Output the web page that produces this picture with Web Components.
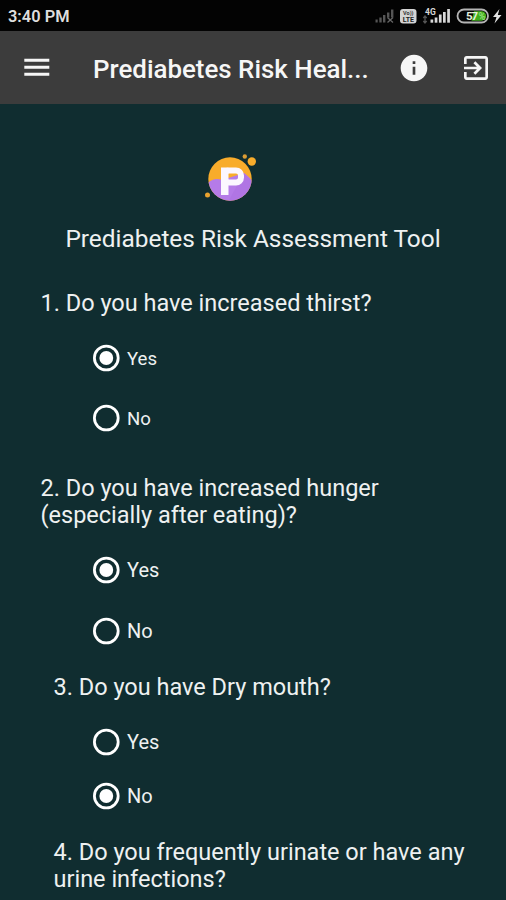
<!DOCTYPE html>
<html lang="en">
<head>
<meta charset="utf-8">
<meta name="viewport" content="width=device-width, initial-scale=1">
<title>Prediabetes Risk Assessment Tool</title>
<style>
  html, body {
    margin: 0;
    height: 100%;
    overflow: hidden;
    background: #102d30;
    color: #eef1f1;
    font-family: Roboto, sans-serif;
  }
</style>
</head>
<body>
<health-app>
  <status-bar slot="status">3:40 PM</status-bar>
  <app-toolbar slot="toolbar">Prediabetes Risk Heal...</app-toolbar>
  <app-logo></app-logo>
  <page-heading>Prediabetes Risk Assessment Tool</page-heading>

  <quiz-question style="--top: 38px; --left: 40.5px; --lead: 25px; --gap: 28px; --label: 18.6px">
    1. Do you have increased thirst?
    <radio-option slot="options" checked>Yes</radio-option>
    <radio-option slot="options">No</radio-option>
  </quiz-question>
  <quiz-question style="--top: 41px; --left: 40.5px; --lead: 25px; --gap: 29px; --drop: 0px">
    2. Do you have increased hunger<br>(especially after eating)?
    <radio-option slot="options" checked>Yes</radio-option>
    <radio-option slot="options">No</radio-option>
  </quiz-question>
  <quiz-question style="--top: 27px; --left: 53.5px; --lead: 25px; --gap: 22px; --drop: 0px">
    3. Do you have Dry mouth?
    <radio-option slot="options">Yes</radio-option>
    <radio-option slot="options" checked>No</radio-option>
  </quiz-question>
  <quiz-question style="--top: 27px; --left: 53.5px">
    4. Do you frequently urinate or have any<br>urine infections?
  </quiz-question>
</health-app>

<script>
  function define(name, html) {
    const template = document.createElement('template');
    template.innerHTML = html;
    customElements.define(name, class extends HTMLElement {
      constructor() {
        super();
        this.attachShadow({ mode: 'open' }).appendChild(template.content.cloneNode(true));
      }
    });
  }

  define('health-app', `
    <style>
      :host {
        display: flex;
        flex-direction: column;
        height: 100vh;
        overflow: hidden;
      }
      main {
        display: flex;
        flex-direction: column;
        flex: 1;
        min-height: 0;
        overflow: hidden;
        background: #102d30;
      }
    </style>
    <slot name="status"></slot>
    <slot name="toolbar"></slot>
    <main><slot></slot></main>
  `);

  define('status-bar', `
    <style>
      :host {
        display: flex;
        justify-content: space-between;
        height: 31px;
        flex: none;
        background: #030303;
        color: #dedede;
      }
      .time {
        padding-left: 8px;
        font-size: 16.4px;
        font-weight: 600;
        line-height: 33px;
      }
      svg {
        display: block;
        flex: none;
      }
    </style>
    <div class="time"><slot></slot></div>
    <svg width="136" height="31" viewBox="370 0 136 31" font-family="Roboto, sans-serif" font-weight="700">
      <!-- first SIM, no signal -->
      <g fill="#555">
        <rect x="375.5" y="19.5" width="2.2" height="3"/>
        <rect x="379.3" y="17.5" width="2.4" height="5"/>
        <rect x="383" y="15" width="2.4" height="7.5"/>
        <rect x="387" y="12.5" width="2.4" height="5"/>
        <rect x="391" y="9.5" width="2.4" height="8"/>
      </g>
      <path d="M387.5 17.5l5.5 5M393 17.5l-5.5 5" stroke="#666" stroke-width="1.3"/>
      <!-- VoLTE badge -->
      <rect x="400" y="9" width="16.5" height="14.5" rx="3" fill="#d4d4d4"/>
      <text x="408.3" y="14.8" font-size="5.5" text-anchor="middle" fill="#333">Vo))</text>
      <text x="408.3" y="21.8" font-size="7" text-anchor="middle" fill="#222">LTE</text>
      <!-- second SIM -->
      <text x="425" y="14.5" font-size="8.5" fill="#d8d8d8">4G</text>
      <path d="M425 16v7M423.3 18l1.7-2 1.7 2M423.3 21l1.7 2 1.7-2" fill="none" stroke="#555" stroke-width="1.3"/>
      <g fill="#d8d8d8">
        <rect x="430.5" y="19.5" width="2.7" height="3.2"/>
        <rect x="434.7" y="17.5" width="2.7" height="5.2"/>
        <rect x="438.9" y="14.5" width="2.7" height="8.2"/>
        <rect x="443" y="12" width="2.7" height="10.7"/>
        <rect x="447.2" y="9" width="2.7" height="13.7"/>
      </g>
      <!-- battery -->
      <rect x="457.5" y="9.5" width="30.5" height="13" rx="6.5" fill="#050505" stroke="#b5b5b5" stroke-width="1.8"/>
      <path d="M474 11.3h7.500a4.700 4.700 0 0 1 0 9.400h-10z" fill="#3fae1c"/>
      <text x="466" y="20" font-size="11.5" fill="#e4f0df" textLength="12">57</text>
      <text x="478.500" y="20" font-size="10" fill="#8fdc78" textLength="7" lengthAdjust="spacingAndGlyphs">%</text>
      <path d="M499.5 9l-6.5 8h3.5l-2 6.500 7-8.500h-3.700z" fill="#e4e4e4"/>
    </svg>
  `);

  define('app-toolbar', `
    <style>
      :host {
        display: flex;
        align-items: center;
        flex: none;
        box-sizing: border-box;
        height: 73px;
        padding: 0 14px 0 20px;
        background: #3c3c3c;
        color: #f6f6f6;
      }
      .title {
        flex: 1;
        margin-left: 41px;
        padding-top: 3px;
        font-size: 25.9px;
        font-weight: 500;
        white-space: nowrap;
      }
      svg {
        display: block;
        flex: none;
        fill: currentColor;
      }
      .exit {
        margin-left: 30px;
      }
    </style>
    <svg class="menu" width="32" height="32" viewBox="0 0 32 32">
      <path d="M4.300 6.700h25v3h-25zM4.300 13.700h25v3h-25zM4.300 20.700h25v3h-25z"/>
    </svg>
    <div class="title"><slot></slot></div>
    <svg width="32" height="32" viewBox="0 0 24 24">
      <path d="M12 2C6.480 2 2 6.480 2 12s4.480 10 10 10 10-4.480 10-10S17.520 2 12 2zm1 15h-2v-6h2v6zm0-8h-2V7h2v2z"/>
    </svg>
    <svg class="exit" width="32" height="32" viewBox="0 0 24 24">
      <path d="M10.090 15.590L11.500 17l5-5-5-5-1.410 1.410L12.670 11H3v2h9.670l-2.580 2.590zM19 3H5c-1.110 0-2 .9-2 2v4h2V5h14v14H5v-4H3v4c0 1.100.89 2 2 2h14c1.100 0 2-.9 2-2V5c0-1.100-.9-2-2-2z"/>
    </svg>
  `);

  define('app-logo', `
    <style>
      :host {
        display: block;
        padding: 46px 0 0 202px;
      }
      svg {
        display: block;
      }
    </style>
    <svg width="58" height="54" viewBox="202 150 58 54">
      <defs><clipPath id="disc"><circle cx="230" cy="179" r="21.7"/></clipPath></defs>
      <g clip-path="url(#disc)">
        <rect x="207" y="156" width="46" height="46" fill="#f8ac2b"/>
        <path d="M207 184c4-5 10-6 15-4l22-7c3 2 6 5 9 9v22h-46z" fill="#b57be8"/>
        <path d="M228 202l16-29 10 10v22h-26z" fill="#a66bdc" opacity=".35"/>
      </g>
      <circle cx="251.8" cy="161.5" r="4.2" fill="#f8ac2b"/>
      <circle cx="244.8" cy="156.5" r="2.2" fill="#d99b34"/>
      <circle cx="207.5" cy="195" r="2.5" fill="#e9a22e"/>
      <!-- badge mark: stem and bowl -->
      <rect x="221" y="167.5" width="7.5" height="27.5" fill="#fbf7ff"/>
      <rect x="224" y="170.5" width="17" height="12" rx="5" fill="none" stroke="#fbf7ff" stroke-width="6"/>
    </svg>
  `);

  define('page-heading', `
    <style>
      :host {
        display: block;
        margin-top: 21px;
        font-size: 24.4px;
        line-height: 27px;
        text-align: center;
      }
    </style>
    <slot></slot>
  `);

  define('quiz-question', `
    <style>
      :host {
        display: block;
        padding-top: var(--top);
      }
      .text {
        padding-left: var(--left);
        font-size: 23.5px;
        line-height: 27px;
        white-space: nowrap;
      }
      .options {
        display: flex;
        flex-direction: column;
        gap: var(--gap);
        padding: var(--lead, 0) 0 0 90px;
      }
    </style>
    <div class="text"><slot></slot></div>
    <div class="options"><slot name="options"></slot></div>
  `);

  define('radio-option', `
    <style>
      :host {
        display: flex;
        align-items: center;
        height: 32px;
        font-size: var(--label, 20px);
      }
      svg {
        display: block;
        margin-right: 5px;
      }
      circle {
        fill: none;
        stroke: #fff;
        stroke-width: 2.8;
      }
      .dot {
        display: none;
        fill: #fff;
        stroke: none;
      }
      :host([checked]) .dot {
        display: block;
      }
      span {
        padding-top: var(--drop, 2px);
      }
    </style>
    <svg width="32" height="32" viewBox="0 0 32 32">
      <circle cx="16.3" cy="16" r="11.9"/>
      <circle class="dot" cx="16.3" cy="16" r="6.9"/>
    </svg>
    <span><slot></slot></span>
  `);
</script>
</body>
</html>
